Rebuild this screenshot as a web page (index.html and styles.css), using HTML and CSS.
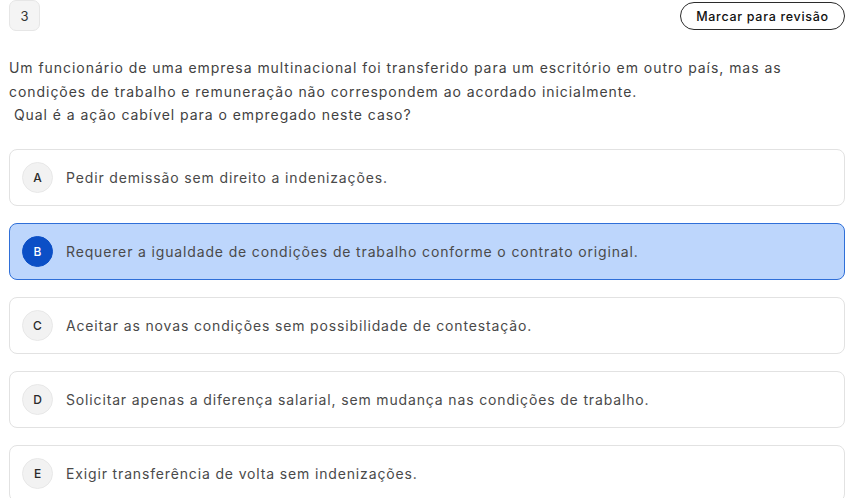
FILE: index.html
```html
<!DOCTYPE html>
<html lang="pt-BR">
<head>
<meta charset="utf-8">
<link rel="stylesheet" href="styles.css">
</head>
<body>
<div class="page">
  <div class="topbar">
    <div class="qnum">3</div>
    <button class="review">Marcar para revisão</button>
  </div>
  <p class="statement">Um funcionário de uma empresa multinacional foi transferido para um escritório em outro país, mas as condições de trabalho e remuneração não correspondem ao acordado inicialmente.<br>&nbsp;Qual é a ação cabível para o empregado neste caso?</p>
  <ul class="options">
    <li class="option"><span class="letter">A</span><span class="text">Pedir demissão sem direito a indenizações.</span></li>
    <li class="option selected"><span class="letter">B</span><span class="text">Requerer a igualdade de condições de trabalho conforme o contrato original.</span></li>
    <li class="option"><span class="letter">C</span><span class="text">Aceitar as novas condições sem possibilidade de contestação.</span></li>
    <li class="option"><span class="letter">D</span><span class="text">Solicitar apenas a diferença salarial, sem mudança nas condições de trabalho.</span></li>
    <li class="option"><span class="letter">E</span><span class="text">Exigir transferência de volta sem indenizações.</span></li>
  </ul>
</div>
</body>
</html>
```

FILE: styles.css
```css
* { box-sizing: border-box; }
html, body { margin: 0; padding: 0; background: #fff; }
body {
  font-family: Inter, "Noto Sans", "Liberation Sans", sans-serif;
  color: #3d3d3d;
  overflow: hidden;
}
.page {
  padding: 0 6px 0 9px;
}
.topbar {
  display: flex;
  justify-content: space-between;
  align-items: flex-start;
  height: 31px;
}
.qnum {
  width: 31px;
  height: 31px;
  border: 1px solid #e6e6e6;
  background: #f4f4f4;
  border-radius: 7px;
  display: flex;
  align-items: center;
  justify-content: center;
  font-size: 13px;
  color: #333;
}
.review {
  margin-top: 2px;
  height: 28px;
  width: 165px;
  border: 1px solid #2b2b2b;
  border-radius: 14px;
  background: #fff;
  font-family: inherit;
  font-size: 12.5px;
  font-weight: 500;
  letter-spacing: 0.7px;
  color: #111;
  padding: 0;
}
.statement {
  margin: 25px 0 0;
  font-size: 14px;
  line-height: 23.5px;
  letter-spacing: 0.95px;
  color: #424242;
}
.options {
  list-style: none;
  margin: 22px 0 0;
  padding: 0;
  display: flex;
  flex-direction: column;
  gap: 17px;
}
.option {
  height: 57px;
  border: 1px solid #e2e2e2;
  border-radius: 8px;
  display: flex;
  align-items: center;
  padding-left: 12px;
  background: #fff;
}
.letter {
  width: 31px;
  height: 31px;
  border-radius: 50%;
  background: #f2f2f2;
  border: 1px solid #e8e8e8;
  display: flex;
  align-items: center;
  justify-content: center;
  font-size: 12px;
  font-weight: 500;
  color: #2a2a2a;
  flex-shrink: 0;
}
.text {
  margin-left: 13px;
  font-size: 14px;
  letter-spacing: 0.85px;
  color: #4a4a4a;
}
.option.selected {
  background: #bdd6fc;
  border-color: #2f6fd8;
}
.option.selected .letter {
  background: #0b4fc6;
  border-color: #0b4fc6;
  color: #fff;
}
```
